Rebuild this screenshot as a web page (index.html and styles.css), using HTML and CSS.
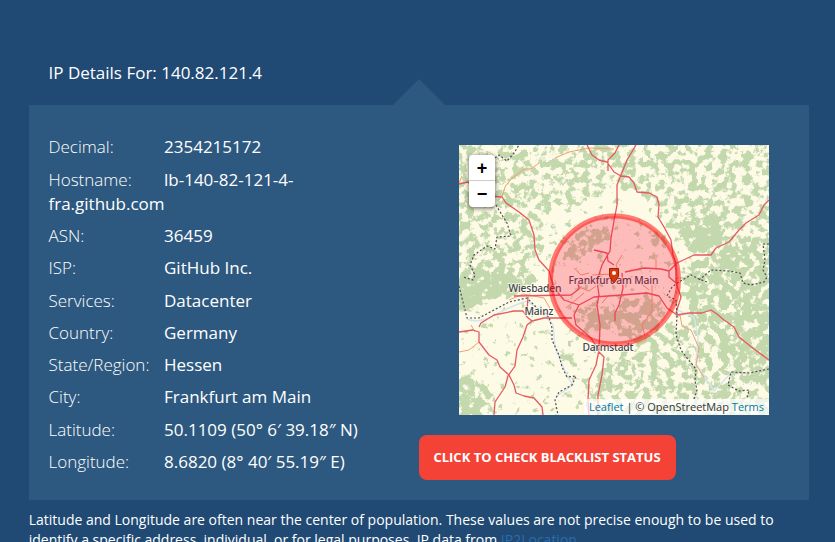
FILE: index.html
```
<!DOCTYPE html>
<html lang="en"><head><meta charset="utf-8"><title>IP Details</title><link rel="stylesheet" href="styles.css"></head>
<body>
<main class="page">
<h1 class="title">IP Details For: 140.82.121.4</h1>
<section class="panel">
<div class="details">
<p><span>Decimal:</span><span>2354215172</span></p>
<p><span>Hostname:</span><span>lb-140-82-121-4-fra.github.com</span></p>
<p><span>ASN:</span><span>36459</span></p>
<p><span>ISP:</span><span>GitHub Inc.</span></p>
<p><span>Services:</span><span>Datacenter</span></p>
<p><span>Country:</span><span>Germany</span></p>
<p><span>State/Region:</span><span>Hessen</span></p>
<p><span>City:</span><span>Frankfurt am Main</span></p>
<p><span>Latitude:</span><span>50.1109 (50° 6′ 39.18″ N)</span></p>
<p><span>Longitude:</span><span>8.6820 (8° 40′ 55.19″ E)</span></p>
</div>
<div class="side">
<div class="map">
<svg class="tiles" viewBox="0 0 310 270" width="310" height="270">
<defs>
<filter id="woods" filterUnits="userSpaceOnUse" x="0" y="0" width="310" height="270" color-interpolation-filters="sRGB">
<feGaussianBlur in="SourceAlpha" stdDeviation="3" result="area"/>
<feTurbulence type="fractalNoise" baseFrequency="0.13" numOctaves="5" seed="7" result="noise"/>
<feComposite in="area" in2="noise" operator="arithmetic" k1="0" k2="0.5" k3="1" k4="0" result="mix"/>
<feColorMatrix in="mix" type="matrix" values="0 0 0 0 0.765  0 0 0 0 0.847  0 0 0 0 0.675  0 0 0 10 -6.5"/>
</filter>
</defs>
<rect width="310" height="270" fill="#fdfae6"/>
<g filter="url(#woods)">
<path fill-opacity=".37" d="M-20-20H330V90L270 110 235 110 205 75 185 50 150 40 140 55 90 65 80 80 95 100 70 120 40 150-20 175Z"/>
<path fill-opacity=".6" d="M0 130L40 125 60 125 80 135 60 148 35 155 0 168ZM102 110L115 92 150 76 150 92 130 108 112 118ZM222 85L250 68 270 95 250 108 228 102Z"/>
<path fill-opacity=".58" d="M225 118L270 105 330 95V240L270 225 240 190 225 160Z"/>
<path fill-opacity=".4" d="M190 185L225 175 240 200 270 230 330 230V290H125V240L150 215Z"/>
<path fill-opacity=".58" d="M-20 226L15 230 35 250 25 290H-20ZM120 168L135 155 150 165 160 152 200 155 208 170 190 190 165 195 150 180 140 192 122 182ZM190 90L205 85 212 105 195 100ZM102 211h14v10h-14Z"/>
</g>
<g class="water"><path d="M8 174Q20 179 36 170T68 156L82 166 94 180 96 202 108 231 114 240 98 251M218 165L235 172 239 192 237 219 255 246 272 228"/></g>
<g class="minor"><path d="M43 52L46 42 52 34 60 28 65 24 72 24 80 18M96 13L110 7 130 3 155 4M0 207L10 205 20 197M221 170L223 181 232 185 240 203 237 220 245 232M193 140V166L183 180 187 195 178 199M115 123L122 130 130 128M133 130L153 129M107 163L125 148M163 110L157 120 160 128M120 142L130 146 137 141M0 38L3 31M12 180L16 187M50 155L64 149 85 153 92 165M197 114V124M180 137L190 145M143 158L150 150"/></g>
<g class="major"><path d="M0 39L9 37 25 51 43 52 47 58 60 67 70 75 75 90 76 105 80 115 90 126 95 143 105 155 120 160 135 152 163 150 188 148 200 151 208 163 218 170 230 168 243 168 252 165 258 169 265 175 275 182 280 192 295 204 310 215M120 160L115 170 117 180 132 193 140 206M128 0L133 10 140 15 148 17 155 27 162 31 170 32 175 38 178 47 190 48 198 52 200 60 199 72 205 82 212 95 214 110 217 118 217 138 222 152 217 168M177 0L168 15 162 30 158 40 158 60 155 76 152 93 151 106 148 111 143 120 138 136 140 150 138 160 141 180 140 205 137 220 130 235 129 255 130 270M140 207L145 212 143 230 139 250V270M160 0L156 8 149 15 149 26M310 55L305 60 300 70 287 78 280 85 270 97 257 103 252 110 235 110 218 118 210 126 202 124 185 123 166 127M210 126V132L217 138M135 105L148 108 149 116 155 120M163 128L164 143 160 160 156 168V176M0 187L14 185 20 187 20 197 30 210 38 215 41 222 50 230 55 240 57 248 65 251 75 253 83 262 84 270M35 270L36 257 46 242 49 231 56 221 58 205 64 192 68 180 73 176 85 173 113 173M20 182L22 178 35 170 55 166 64 166 68 172 73 176M55 151L112 150 120 144 119 138M69 152L68 166"/></g>
<g class="border"><path d="M36 13L40 10 48 16 55 8 60 0M37 60L43 70 48 78 52 91 38 92 36 104 28 101 15 110 11 120 16 130 14 135 4 132M0 141L8 173 20 173 35 165 50 157 68 153 80 165 90 172 93 183 93 195 100 210 103 222 108 232 117 231 113 240 100 247 96 255 99 270M248 137L240 134 232 130 220 137 213 142 208 151 217 155 218 170 217 190 222 205 228 213 237 224 236 236 238 245 235 254M240 135L245 131 252 125 270 126 281 128 284 138 292 140 305 137 308 132M310 99L304 99 306 115 304 125 308 132M310 224L290 228 272 227 269 240 280 246 290 245 288 253"/></g>
<g class="places"><text x="76" y="147" textLength="53">Wiesbaden</text><text x="80" y="170" textLength="29">Mainz</text><text x="154.500" y="139" textLength="90">Frankfurt am Main</text><text x="149" y="206" textLength="51">Darmstadt</text></g>
<circle class="range" cx="155.500" cy="135" r="64"/>
<path class="pin" d="M150.500 123.500h9v8L155 138l-4.500-6.500Z"/><circle cx="155" cy="128" r="2" fill="#fff"/>
</svg>
<div class="zoom"><button>+</button><button>−</button></div>
<div class="credit"><a>Leaflet</a> | © OpenStreetMap <a>Terms</a></div>
</div>
<button class="check">CLICK TO CHECK BLACKLIST STATUS</button>
</div>
</section>
<p class="note">Latitude and Longitude are often near the center of population. These values are not precise enough to be used to identify a specific address, individual, or for legal purposes. IP data from <a>IP2Location</a>.</p>
</main>
</body></html>
```
FILE: styles.css
```
*{box-sizing:border-box}
html,body{height:100%;overflow:hidden}
body{margin:0;background:#204a74;color:#fff;font-family:"Open Sans",sans-serif}
.page{padding:60px 26px 0 29px}
.title{margin:0 0 19px 19.500px;font-size:17px;line-height:26px;height:26px;font-weight:400}
.panel{position:relative;width:780px;height:395px;background:#2d5980;display:flex;padding:30px 20px 0 19.500px}
.panel::before{content:"";position:absolute;left:364px;top:-26px;border:26px solid transparent;border-top:0;border-bottom-color:#2d5980}
.details{width:370.500px;padding-top:.4px;font-size:17px;line-height:24px}
.details p{margin:0 0 8.300px;max-width:320px}
.details p:nth-child(2){max-width:260px}
.details span:first-child{display:inline-block;width:115.500px;font-weight:300}
.side{padding-top:10px}
.map{position:relative;width:310px;height:270px;margin-left:40px;overflow:hidden}
.tiles{display:block}
.tiles path{stroke-linejoin:round}
.water{fill:none;stroke:#d5e5ed;stroke-width:1.500}
.minor{fill:none;stroke:#f0a078;stroke-width:1}
.major{fill:none;stroke:#e65a60;stroke-width:1.300}
.border{fill:none;stroke:#554c5c;stroke-width:1.200;stroke-dasharray:2 2}
.places{font:500 10.400px "Noto Sans",sans-serif;fill:#444;text-anchor:middle;stroke:#fff;stroke-opacity:.6;stroke-width:2px;paint-order:stroke}
.range{fill:#ff0033;fill-opacity:.25;stroke:#ff0000;stroke-opacity:.5;stroke-width:5}
.pin{fill:#d63a0d;stroke:#9e2100;stroke-width:1}
.zoom{position:absolute;left:10px;top:10px;width:26px;height:52px;border-radius:4px;background:#fff;box-shadow:0 1px 5px rgba(0,0,0,.65)}
.zoom button{display:block;width:26px;height:26px;padding:0;border:0;background:none;font:bold 18px/26px "Liberation Sans",sans-serif;color:#000}
.zoom button:first-child{border-bottom:1px solid #ccc}
.credit{position:absolute;right:0;bottom:0;height:16px;padding:0 5px;background:rgba(255,255,255,.7);color:#333;font-size:11px;line-height:16px;white-space:nowrap}
.credit a{color:#0078a8}
.check{display:block;width:257px;height:45px;margin-top:20px;padding:0 1px 2px 0;border:0;border-radius:8px;background:#f44336;color:#fff;font:700 13px "Open Sans",sans-serif}
.note{margin:10px 0 0 -.3px;font-size:14px;line-height:20px}
.note a{color:#2a6caf}
```
